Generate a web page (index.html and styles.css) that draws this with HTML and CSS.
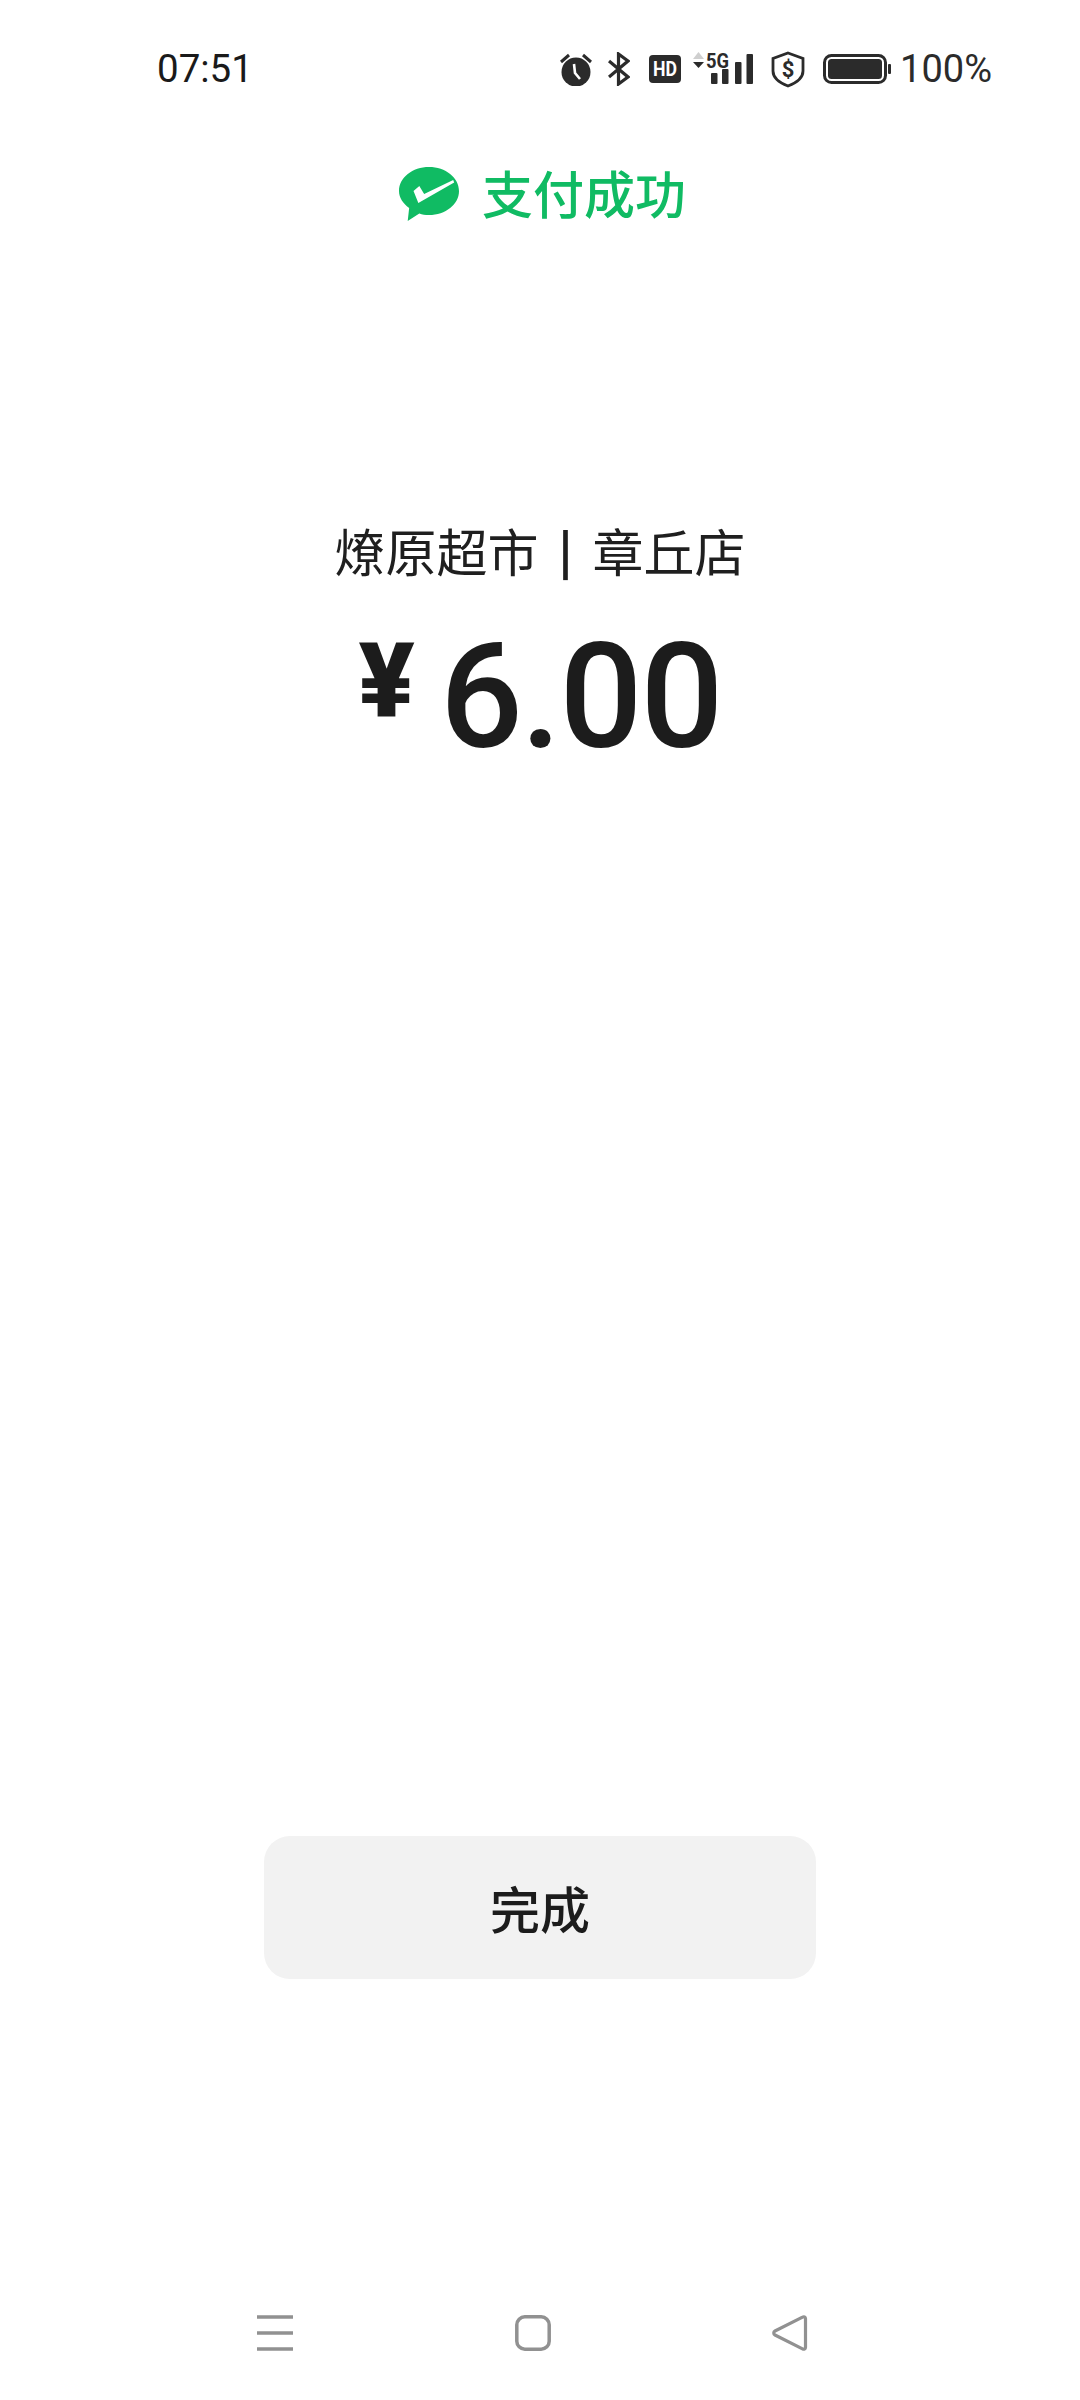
FILE: index.html
```html
<!doctype html>
<html>
<head>
<meta charset="utf-8">
<title>支付成功</title>
<link rel="stylesheet" href="styles.css">
</head>
<body>
<div class="page">
	<div class="status">
		<span class="time">07:51</span>
		<div class="status-right">
			<svg class="ic-alarm" width="32" height="34" viewBox="0 0 32 34">
				<circle cx="16" cy="20" r="14.5" fill="#2b2b2b"/>
				<path d="M1 10 9 3M31 10 23 3" stroke="#2b2b2b" stroke-width="3" fill="none"/>
				<path d="M14 12 15 21 20 27" stroke="#fff" stroke-width="2.6" fill="none"/>
			</svg>
			<svg class="ic-bt" width="22" height="34" viewBox="0 0 22 34">
				<path d="M1 9 20 25 10.500 32V2L20 9 1 25" stroke="#2b2b2b" stroke-width="3.200" fill="none"/>
			</svg>
			<svg class="ic-hd" width="32" height="28" viewBox="0 0 32 28">
				<rect width="32" height="28" rx="4" fill="#2b2b2b"/>
				<text x="16" y="21" text-anchor="middle" class="svg-hd" textLength="24" lengthAdjust="spacingAndGlyphs">HD</text>
			</svg>
			<svg class="ic-signal" width="60" height="37" viewBox="0 -4 60 37">
				<path d="M0 7 5.500 0 11 7Z" fill="#cfcfcf"/>
				<path d="M0 10H11L5.500 16Z" fill="#2b2b2b"/>
				<text x="13" y="16" class="svg-5g" textLength="23" lengthAdjust="spacingAndGlyphs">5G</text>
				<rect x="18" y="21" width="6.500" height="11" rx="1" fill="#2b2b2b"/>
				<rect x="29" y="17" width="6.500" height="15" rx="1" fill="#2b2b2b"/>
				<rect x="42" y="10" width="6.500" height="22" rx="1" fill="#2b2b2b"/>
				<rect x="53.500" y="2" width="6.500" height="30" rx="1" fill="#2b2b2b"/>
			</svg>
			<svg class="ic-shield" width="34" height="37" viewBox="0 0 34 37">
				<path d="M17 2 32 7.500V20C32 27 25 32 17 35 9 32 2 27 2 20V7.500Z" stroke="#2b2b2b" stroke-width="2.800" fill="none"/>
				<text x="17" y="26" text-anchor="middle" class="svg-dollar">$</text>
			</svg>
			<svg class="ic-battery" width="68" height="30" viewBox="0 0 68 30">
				<rect x="1.500" y="1.500" width="61" height="27" rx="7" stroke="#2b2b2b" stroke-width="3" fill="none"/>
				<rect x="5" y="5" width="54" height="20" rx="3.500" fill="#2b2b2b"/>
				<rect x="65" y="10" width="3" height="10" rx="1" fill="#2b2b2b"/>
			</svg>
			<span class="percent">100%</span>
		</div>
	</div>

	<div class="title">
		<svg class="logo" width="60" height="54" viewBox="0 0 62 54" preserveAspectRatio="none">
			<path d="M31 0C48 0 62 10.500 62 24S48 48 31 48C27 48 24 47.500 21 46.500L9 54 10.500 41C4 36.500 0 30.500 0 24 0 10.500 14 0 31 0Z" fill="#10bb63"/>
			<path d="M15 24 21 19 26 27 56 13 57 15.500 20 36Z" fill="#fff"/>
		</svg>
		<span class="title-text">支付成功</span>
	</div>

	<div class="merchant">燎原超市 <span class="sep">|</span> 章丘店</div>
	<div class="amount"><span class="yen">¥</span><span class="num">6.00</span></div>

	<div class="btn">完成</div>

	<div class="nav">
		<svg width="36" height="36" viewBox="0 0 36 36">
			<path d="M0 2H36M0 18H36M0 34H36" stroke="#919191" stroke-width="3.500" fill="none"/>
		</svg>
		<svg width="36" height="36" viewBox="0 0 36 36">
			<rect x="1.800" y="1.800" width="32.400" height="32.400" rx="8" stroke="#919191" stroke-width="3.500" fill="none"/>
		</svg>
		<svg width="36" height="36" viewBox="0 0 36 36">
			<path d="M33.500 3.500C33.500 2 32 1.300 30.500 2.200L3 16C1.300 17 1.300 19 3 20L30.500 33.800C32 34.700 33.500 34 33.500 32.500Z" stroke="#919191" stroke-width="3.200" fill="none"/>
		</svg>
	</div>
</div>
</body>
</html>
```

FILE: styles.css
```css
*{ margin:0; padding:0; box-sizing:border-box;}
body{ background:#fff; font-family:"Roboto","Noto Sans CJK SC",sans-serif; color:#1f1f1f;}
.page{ width:1080px; height:2400px; display:flex; flex-direction:column; align-items:center; overflow:hidden;}

.status{ width:100%; height:40px; margin-top:49px; padding:0 88px 0 157px; display:flex; justify-content:space-between; align-items:center;}
.time{ font-size:38.500px; line-height:40px; color:#1a1a1a;}
.status-right{ display:flex; align-items:center;}
.status-right svg{ display:block; flex:none;}
.ic-bt{ margin-left:16px;}
.ic-hd{ margin-left:19px;}
.ic-signal{ margin-left:12px; margin-bottom:5px;}
.ic-shield{ margin-left:18px;}
.ic-battery{ margin-left:18px;}
.percent{ margin-left:9px; font-size:38px; line-height:40px; color:#2b2b2b;}
.svg-hd{ font-family:"Roboto",sans-serif; font-size:21px; font-weight:700; fill:#fff;}
.svg-5g{ font-family:"Roboto",sans-serif; font-size:20px; font-weight:700; fill:#2b2b2b;}
.svg-dollar{ font-family:"Roboto",sans-serif; font-size:22px; font-weight:700; fill:#2b2b2b;}

.title{ margin-top:78px; height:60px; display:flex; align-items:center; gap:23px;}
.logo{ display:block; margin:0 0 6px 5px;}
.title-text{ font-size:51px; line-height:60px; font-weight:500; color:#10bb63;}

.merchant{ margin-top:298px; height:60px; font-size:51px; line-height:60px; font-weight:400; word-spacing:7px; color:#1f1f1f; white-space:pre;}
.sep{ font-size:60px; line-height:0; font-weight:500;}
.amount{ margin-top:33px; height:160px; display:flex; align-items:baseline; color:#1c1c1c;}
.yen{ font-size:104px; line-height:160px; font-weight:900; margin-right:25px; position:relative; top:-31px;}
.num{ font-size:146px; line-height:160px; font-weight:500; letter-spacing:-2px;}

.btn{ margin-top:1058px; width:552px; height:143px; flex:none; padding-bottom:2px; background:#f2f2f2; border-radius:26px; display:flex; align-items:center; justify-content:center; font-size:50px; font-weight:500; color:#1c1c1c;}

.nav{ width:100%; margin-top:auto; margin-bottom:49px; padding:0 272px 0 257px; display:flex; justify-content:space-between;}
.nav svg{ display:block;}
```
